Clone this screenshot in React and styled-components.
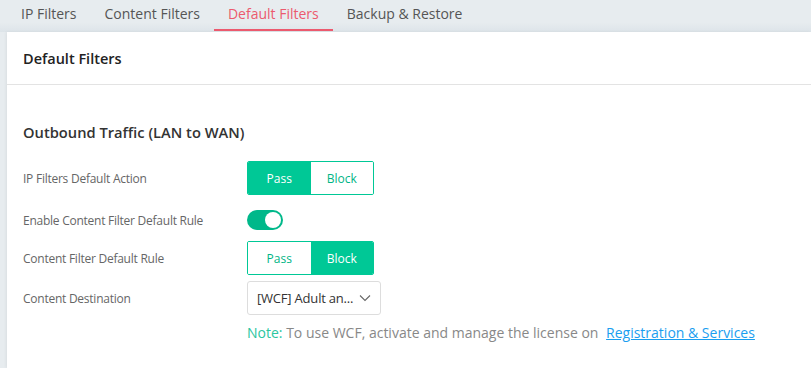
import styled, { createGlobalStyle } from 'styled-components';

const GlobalStyle = createGlobalStyle`
    body {
        margin: 0;
        background: #e7ecef;
        font-family: 'Open Sans', 'Noto Sans', sans-serif;
    }
`;

const tabs = ['IP Filters', 'Content Filters', 'Default Filters', 'Backup & Restore'];

const Segmented = ({ value }) => (
    <SegGroup>
        <SegButton $active={value === 'Pass'}>Pass</SegButton>
        <SegButton $active={value === 'Block'}>Block</SegButton>
    </SegGroup>
);

const App = () => {
    return (
        <Page>
            <GlobalStyle />
            <TabBar>
                {tabs.map((tab) => (
                    <Tab key={tab} $active={tab === 'Default Filters'}>
                        {tab}
                    </Tab>
                ))}
            </TabBar>
            <Card>
                <CardHeader>Default Filters</CardHeader>
                <CardBody>
                    <SectionTitle>Outbound Traffic (LAN to WAN)</SectionTitle>
                    <Row $gap={15}>
                        <Label>IP Filters Default Action</Label>
                        <Segmented value="Pass" />
                    </Row>
                    <Row $gap={11}>
                        <Label>Enable Content Filter Default Rule</Label>
                        <Toggle>
                            <Knob />
                        </Toggle>
                    </Row>
                    <Row $gap={6}>
                        <Label>Content Filter Default Rule</Label>
                        <Segmented value="Block" />
                    </Row>
                    <Row $gap={0}>
                        <Label>Content Destination</Label>
                        <Select>
                            <span>[WCF] Adult an...</span>
                            <svg width="12" height="8" viewBox="0 0 12 8">
                                <path d="M1 1.5l5 5 5-5" fill="none" stroke="#666" strokeWidth="1.1" />
                            </svg>
                        </Select>
                    </Row>
                    <Note>
                        <NoteLabel>Note:</NoteLabel> To use WCF, activate and manage the license on{' '}
                        <NoteLink href="#">Registration &amp; Services</NoteLink>
                    </Note>
                </CardBody>
            </Card>
        </Page>
    );
};

export default App;

const Page = styled.div`
    min-height: 368px;
    padding-left: 7px;
`;

const TabBar = styled.div`
    display: flex;
    height: 32px;
    background: linear-gradient(to bottom, #e7ecef 70%, #dde4e9 100%);
    margin-left: -7px;
    padding-left: 7px;
`;

const Tab = styled.div`
    padding: 4px 14px 0;
    height: 25px;
    font-size: 14px;
    color: ${(p) => (p.$active ? '#ec5a6e' : '#555')};
    border-bottom: 2px solid ${(p) => (p.$active ? '#ec5a6e' : 'transparent')};
    box-sizing: content-box;
`;

const Card = styled.div`
    background: #fff;
    min-height: 336px;
    box-shadow: -1px 0 3px rgba(0, 0, 0, 0.06);
`;

const CardHeader = styled.div`
    height: 52px;
    display: flex;
    align-items: center;
    padding-left: 16px;
    font-size: 14.5px;
    font-weight: 600;
    color: #222;
    border-bottom: 1px solid #e3e3e3;
`;

const CardBody = styled.div`
    padding: 37px 16px 0;
`;

const SectionTitle = styled.div`
    font-size: 14.7px;
    line-height: 20px;
    font-weight: 600;
    color: #333;
    margin-bottom: 19px;
`;

const Row = styled.div`
    display: grid;
    grid-template-columns: 224px auto;
    align-items: center;
    justify-content: start;
    margin-bottom: ${(p) => p.$gap}px;
`;

const Label = styled.div`
    font-size: 12px;
    letter-spacing: -0.25px;
    color: #666;
`;

const SegGroup = styled.div`
    display: flex;
    width: 127px;
    height: 34px;
    border: 1px solid #00c896;
    border-radius: 2px;
    box-sizing: border-box;
    overflow: hidden;
`;

const SegButton = styled.div`
    flex: 1;
    display: flex;
    align-items: center;
    justify-content: center;
    font-size: 12px;
    background: ${(p) => (p.$active ? '#00c896' : '#fff')};
    color: ${(p) => (p.$active ? '#fff' : '#00b585')};
`;

const Toggle = styled.div`
    width: 36px;
    height: 20px;
    border-radius: 10px;
    background: #00b88a;
    position: relative;
`;

const Knob = styled.div`
    position: absolute;
    right: 2px;
    top: 2px;
    width: 16px;
    height: 16px;
    border-radius: 50%;
    background: #fff;
`;

const Select = styled.div`
    width: 134px;
    height: 34px;
    box-sizing: border-box;
    border: 1px solid #ddd;
    border-radius: 3px;
    display: flex;
    align-items: center;
    justify-content: space-between;
    padding: 0 9px;
    font-size: 13px;
    letter-spacing: -0.2px;
    color: #333;
`;

const Note = styled.div`
    margin: 8px 0 0 224px;
    font-size: 14px;
    line-height: 19px;
    color: #888;
`;

const NoteLabel = styled.span`
    color: #2bc6a0;
`;

const NoteLink = styled.a`
    color: #1a9ef0;
    margin-left: 4px;
`;
